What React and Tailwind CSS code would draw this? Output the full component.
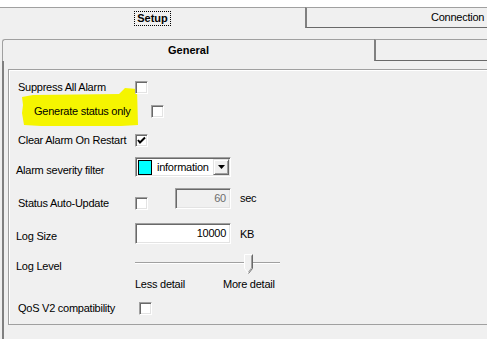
import React from 'react';

const sunken = 'border border-t-[#a0a0a0] border-l-[#a0a0a0] border-r-white border-b-white shadow-[inset_1px_1px_0_#696969,inset_-1px_-1px_0_#e3e3e3]';

function Checkbox({ checked }) {
    return (
        <span className={`w-[13px] h-[13px] shrink-0 bg-white flex items-center justify-center ${sunken}`}>
            {checked && (
                <svg width="9" height="9" viewBox="0 0 9 9">
                    <path d="M1 4 L3 6.5 L8 1.5" fill="none" stroke="#000" strokeWidth="2" />
                </svg>
            )}
        </span>
    );
}

function Combo() {
    return (
        <div className={`w-[96px] h-[20px] bg-white flex items-center pl-[2px] pr-[1px] ${sunken}`}>
            <span className="w-[14px] h-[15px] bg-[#00ffff] border border-black shrink-0" />
            <span className="ml-[5px] flex-1">information</span>
            <span className="w-[16px] h-[16px] bg-[#f0f0f0] border border-t-[#e3e3e3] border-l-[#e3e3e3] border-r-[#696969] border-b-[#696969] shadow-[inset_1px_1px_0_#fff,inset_-1px_-1px_0_#a0a0a0] flex items-center justify-center">
                <svg width="7" height="4" viewBox="0 0 7 4">
                    <path d="M0 0 H7 L3.5 4 Z" fill="#000" />
                </svg>
            </span>
        </div>
    );
}

function Slider() {
    return (
        <div className="relative w-[145px] h-[20px]">
            <div className="absolute left-0 right-0 top-[8px] h-[2px] border-t border-[#a0a0a0] bg-white" />
            <svg className="absolute left-[109px] top-0" width="10" height="21" viewBox="0 0 10 21">
                <path d="M0.5 0.5 H8.5 V14.5 L4.5 19.5 L0.5 14.5 Z" fill="#f0f0f0" stroke="#fff" />
                <path d="M8.5 0.5 V14.5 L4.5 19.5" fill="none" stroke="#696969" />
                <path d="M7.5 1.5 V14 L4.5 18" fill="none" stroke="#a0a0a0" />
            </svg>
        </div>
    );
}

export default function App() {
    return (
        <div className="w-[487px] h-[339px] bg-white overflow-hidden relative text-[11px] leading-[13px] tracking-[-0.25px] text-black font-['Liberation_Sans',Arial,sans-serif]">
            {/* Top strip */}
            <div className="h-[7px] bg-white" />

            {/* Outer tabs */}
            <div className="flex h-[21px]">
                <div className="w-[305px] border-t border-[#a0a0a0] bg-[#f0f0f0] flex justify-center pt-[3px]">
                    <span className="font-bold tracking-normal px-[3px] h-[15px] leading-[13px] outline-1 outline-dotted outline-black -outline-offset-1 pt-[1px]">Setup</span>
                </div>
                <div className="flex-1 bg-[#f0f0f0] border-t border-l-2 border-b border-t-[#a0a0a0] border-l-[#808080] border-b-[#696969] pl-[124px] pt-[3px] whitespace-nowrap">
                    Connection
                </div>
            </div>

            {/* Setup pane */}
            <div className="h-[311px] bg-[#f0f0f0] pt-[11px] pl-[2px]">
                {/* Inner tabs */}
                <div className="flex h-[22px]">
                    <div className="w-[372px] border-t border-l border-[#a0a0a0] rounded-tl-[3px] flex justify-center pt-[4px] font-bold tracking-normal">
                        General
                    </div>
                    <div className="flex-1 border-t border-l-2 border-b border-t-[#a0a0a0] border-l-[#808080] border-b-[#696969]" />
                </div>

                {/* General pane */}
                <div className="h-[279px] border-l-2 border-l-[#808080] pl-[4px] pt-[8px]">
                    <div className="relative h-[256px] w-[500px] border border-[#a0a0a0] shadow-[inset_1px_1px_0_#fff]">
                        {/* Yellow highlighter mark */}
                        <svg className="absolute left-[12px] top-[17px] pointer-events-none" width="118" height="41" viewBox="0 0 118 41">
                            <path d="M1 10 L12 8 L98 7 L104 1 L116 2 L117 38 L100 39 L20 39 L3 38 L1 26 L2 18 Z" fill="#f5f500" />
                        </svg>

                        <div className="relative flex items-center h-[14px] mt-[10px] pl-[9px]">
                            <span className="w-[117px]">Suppress All Alarm</span>
                            <Checkbox />
                        </div>
                        <div className="relative flex items-center h-[13px] mt-[11px] pl-[25px]">
                            <span className="w-[117px]">Generate status only</span>
                            <Checkbox />
                        </div>
                        <div className="flex items-center h-[14px] mt-[15px] pl-[9px]">
                            <span className="w-[117px]">Clear Alarm On Restart</span>
                            <Checkbox checked />
                        </div>
                        <div className="flex items-end h-[20px] mt-[10px] pl-[7px]">
                            <span className="w-[119px]">Alarm severity filter</span>
                            <Combo />
                        </div>
                        <div className="flex items-start h-[22px] mt-[11px] pl-[9px]">
                            <span className="w-[117px] mt-[9px]">Status Auto-Update</span>
                            <span className="mt-[9px]"><Checkbox /></span>
                            <span className={`ml-[27px] w-[56px] h-[21px] bg-[#f0f0f0] text-[#6d6d6d] text-right pr-[4px] pt-[3px] ${sunken}`}>60</span>
                            <span className="ml-[9px] mt-[4px]">sec</span>
                        </div>
                        <div className="flex items-center h-[21px] mt-[13px] pl-[7px]">
                            <span className="w-[119px] mt-[5px]">Log Size</span>
                            <span className={`w-[96px] h-[21px] bg-white text-right pr-[4px] pt-[3px] ${sunken}`}>10000</span>
                            <span className="ml-[9px] mt-[2px]">KB</span>
                        </div>
                        <div className="flex items-start h-[20px] mt-[10px] pl-[7px]">
                            <span className="w-[119px] mt-[6px]">Log Level</span>
                            <Slider />
                        </div>
                        <div className="flex items-center h-[12px] mt-[4px] pl-[126px]">
                            <span className="w-[88px]">Less detail</span>
                            <span>More detail</span>
                        </div>
                        <div className="flex items-center h-[14px] mt-[11px] pl-[9px]">
                            <span className="w-[121px]">QoS V2 compatibility</span>
                            <Checkbox />
                        </div>
                    </div>
                </div>
            </div>
        </div>
    );
}
